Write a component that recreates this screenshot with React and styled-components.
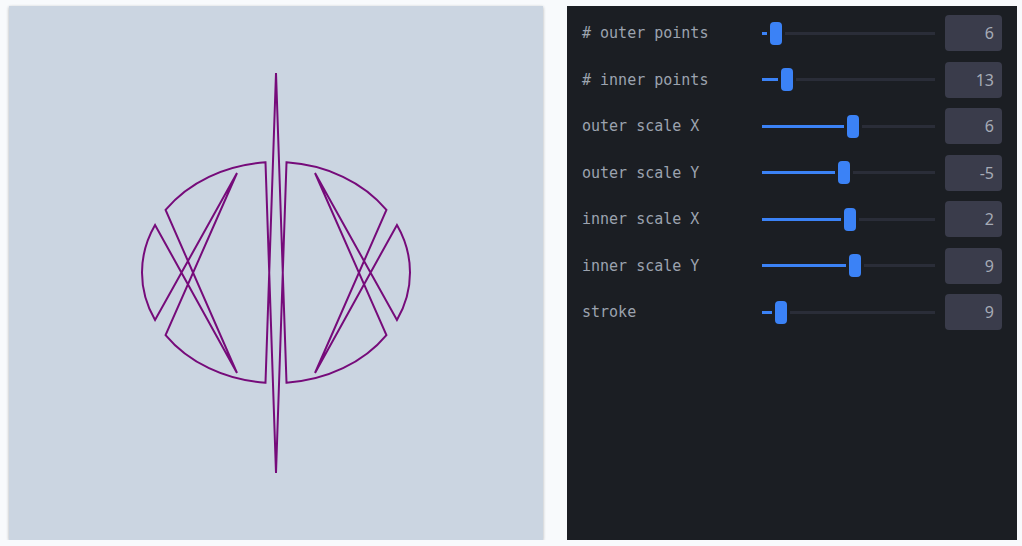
import styled, { createGlobalStyle } from "styled-components";

const GlobalStyle = createGlobalStyle`
	html, body {
		margin: 0;
		padding: 0;
		background: #f8fafc;
	}
`;

const Page = styled.div`
	display: flex;
	gap: 24px;
	padding: 6px 0 0 9px;
`;

const Canvas = styled.div`
	width: 534px;
	height: 534px;
	background: #cbd5e1;
	box-shadow: 0 1px 3px rgba(0, 0, 0, 0.3);
	flex-shrink: 0;
`;

const Panel = styled.div`
	width: 450px;
	height: 534px;
	box-sizing: border-box;
	background: #1b1e23;
	padding: 9px 15px;
	display: flex;
	flex-direction: column;
	gap: 10.5px;
`;

const Row = styled.div`
	display: flex;
	align-items: center;
	height: 36px;
`;

const Label = styled.div`
	width: 180px;
	font-family: "DejaVu Sans Mono", "Liberation Mono", monospace;
	font-size: 15px;
	color: #9ca3af;
`;

const Slider = styled.div`
	width: 173px;
	display: flex;
	align-items: center;
	gap: 3px;
	margin-right: 10px;
`;

const Fill = styled.div`
	height: 3px;
	background: #3b82f6;
	flex-shrink: 0;
`;

const Thumb = styled.div`
	width: 12px;
	height: 23px;
	border-radius: 4px;
	background: #3b82f6;
	flex-shrink: 0;
`;

const Rest = styled.div`
	flex: 1;
	height: 3px;
	background: #2a2d38;
`;

const NumberBox = styled.input`
	width: 57px;
	height: 36px;
	box-sizing: border-box;
	border: none;
	border-radius: 4px;
	background: #3a3c4b;
	color: #a6abb6;
	font-family: "Noto Sans", "Open Sans", sans-serif;
	font-size: 16px;
	text-align: right;
	padding: 0 8px 0 0;
	outline: none;
`;

const controls = [
	{ label: "# outer points", value: 6, fill: 5 },
	{ label: "# inner points", value: 13, fill: 16 },
	{ label: "outer scale X", value: 6, fill: 82 },
	{ label: "outer scale Y", value: -5, fill: 73 },
	{ label: "inner scale X", value: 2, fill: 79 },
	{ label: "inner scale Y", value: 9, fill: 84 },
	{ label: "stroke", value: 9, fill: 10 },
];

// figure geometry (canvas coordinates)
const cx = 267;
const cy = 266.5;
const rx = 134;
const ry = 110.5;

const pt = (deg) => {
	const r = (deg * Math.PI) / 180;
	return `${(cx + rx * Math.cos(r)).toFixed(2)} ${(cy + ry * Math.sin(r)).toFixed(2)}`;
};
const arc = (deg) => `A ${rx} ${ry} 0 0 1 ${pt(deg)}`;

const figure = [
	`M ${pt(214.5)}`,
	arc(265.5),
	"L 267 467",
	`L ${pt(274.5)}`,
	arc(325.5),
	"L 306 367",
	`L ${pt(334.5)}`,
	arc(385.5),
	"L 306 167",
	`L ${pt(34.5)}`,
	arc(85.5),
	"L 267 67",
	`L ${pt(94.5)}`,
	arc(145.5),
	"L 228 167",
	`L ${pt(154.5)}`,
	arc(205.5),
	"L 228 367",
	"Z",
].join(" ");

const App = () => {
	return (
		<Page>
			<GlobalStyle />
			<Canvas>
				<svg width="534" height="534" viewBox="0 0 534 534">
					<path d={figure} fill="none" stroke="#760b7a" strokeWidth="2" />
				</svg>
			</Canvas>
			<Panel>
				{controls.map((c) => (
					<Row key={c.label}>
						<Label>{c.label}</Label>
						<Slider>
							<Fill style={{ width: c.fill }} />
							<Thumb />
							<Rest />
						</Slider>
						<NumberBox type="text" readOnly value={c.value} />
					</Row>
				))}
			</Panel>
		</Page>
	);
};

export default App;
